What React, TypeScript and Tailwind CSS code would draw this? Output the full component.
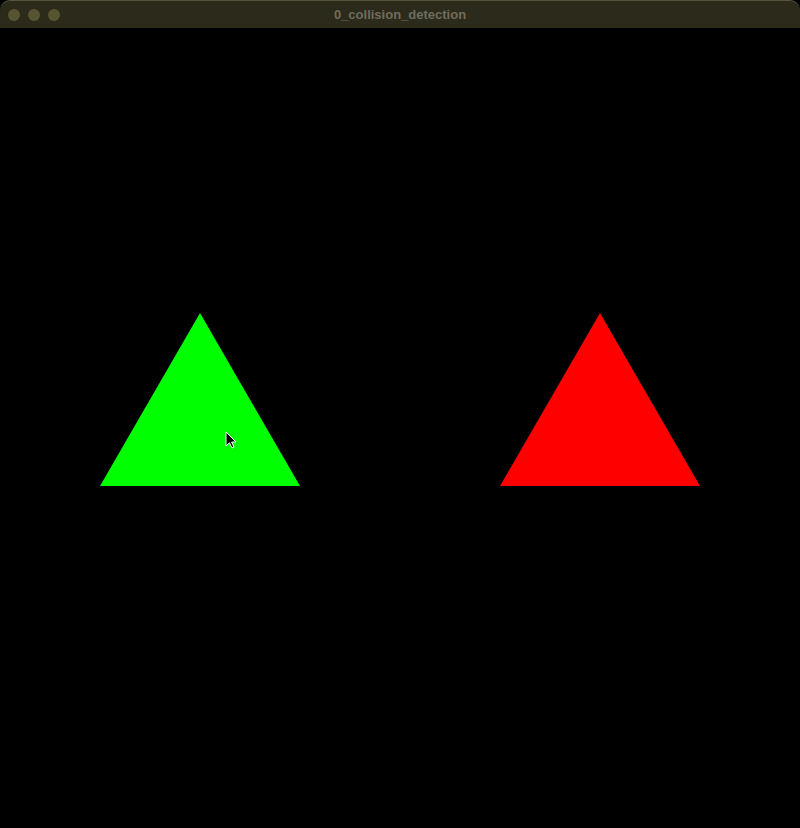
import React from 'react';

const TitleBar: React.FC<{ title: string }> = ({ title }) => (
  <div className="relative flex h-[28px] items-center rounded-t-[10px] border-t border-[#55543f] bg-[#2b2a1b]">
    <div className="flex items-center gap-[8px] pl-[8px]">
      <span className="h-[12px] w-[12px] rounded-full bg-[#57552f]" />
      <span className="h-[12px] w-[12px] rounded-full bg-[#57552f]" />
      <span className="h-[12px] w-[12px] rounded-full bg-[#57552f]" />
    </div>
    <div className="absolute inset-0 flex items-center justify-center text-[13px] font-bold text-[#6e6d5c] [font-family:'Liberation_Sans',Arial,sans-serif]">
      {title}
    </div>
  </div>
);

export default function App() {
  return (
    <div className="flex h-[828px] w-[800px] flex-col overflow-hidden bg-black">
      <TitleBar title="0_collision_detection" />
      <div className="relative flex-1 bg-black">
        <svg width="800" height="800" viewBox="0 0 800 800" className="block">
          <polygon points="200,285 100,458 300,458" fill="#00ff00" />
          <polygon points="600,285 500,458 700,458" fill="#ff0000" />
          {/* mouse cursor */}
          <path
            d="M226 404 L226 418 L229.5 414.8 L232 420 L234 419 L231.6 414 L236 414 Z"
            fill="#000"
            stroke="#fff"
            strokeWidth="1"
            strokeLinejoin="round"
          />
        </svg>
      </div>
    </div>
  );
}
